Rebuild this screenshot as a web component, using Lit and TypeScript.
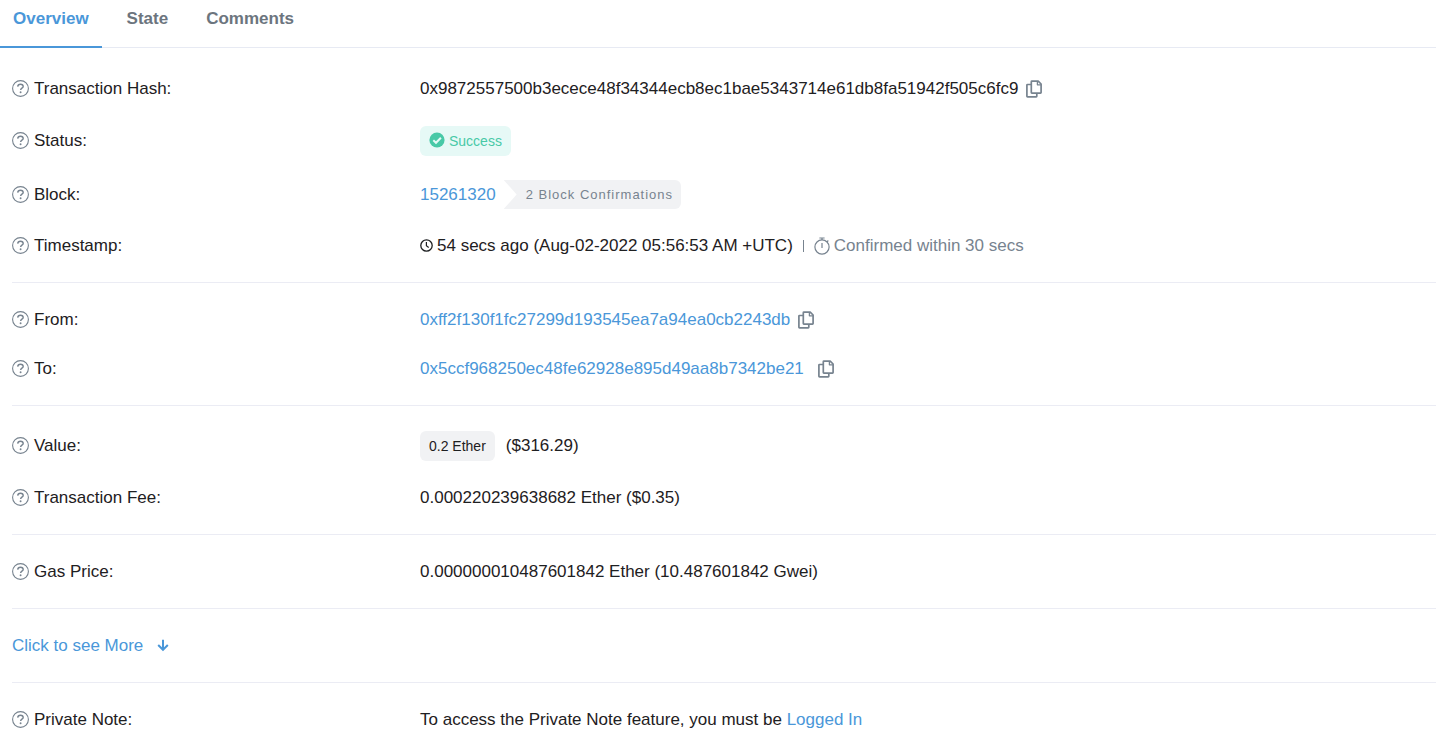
import { LitElement, html, svg, css } from "lit";
import { customElement, property, state } from "lit/decorators.js";
import { classMap } from "lit/directives/class-map.js";

const icons = {
  help: svg`<svg width="17" height="17" viewBox="0 0 17 17" fill="none" stroke="currentColor" aria-hidden="true">
    <circle cx="8.5" cy="8.5" r="7.9" stroke-width="1.1"/>
    <path d="M5.7 6.6c.1-1.600 1.200-2.400 2.800-2.400s2.700.8 2.700 2.200c0 1.800-2.600 1.800-2.600 3.600" stroke-width="1.400"/>
    <circle cx="8.600" cy="12.300" r=".95" fill="currentColor" stroke="none"/>
  </svg>`,
  copy: svg`<svg width="16" height="18" viewBox="0 0 16 18" fill="none" stroke="currentColor" stroke-width="1.700" stroke-linejoin="round" aria-hidden="true">
    <path d="M5.900 1.100h6.300l2.900 2.900v8.500a.6.600 0 0 1-.6.600H5.900a.6.600 0 0 1-.6-.6V1.700a.6.600 0 0 1 .6-.6z"/>
    <path d="M11.400 1.300v3.500h3.500" stroke-width="1.300"/>
    <path d="M5 4.500H1.500a.6.600 0 0 0-.6.600v11.200a.6.600 0 0 0 .6.600h8.700a.6.600 0 0 0 .6-.6v-3"/>
  </svg>`,
  check: svg`<svg width="16" height="18" viewBox="0 0 16 18" aria-hidden="true">
    <circle cx="8" cy="8" r="7.600" fill="currentColor"/>
    <path d="M4.300 8.200l2.700 2.600 4.900-5" fill="none" stroke="#e6f9f6" stroke-width="2"/>
  </svg>`,
  clock: svg`<svg width="13" height="13" viewBox="0 0 13 13" fill="none" stroke="currentColor" aria-hidden="true">
    <circle cx="6.500" cy="6.500" r="5.700" stroke-width="1.300"/>
    <path d="M6.400 3v3.800l2.300 1.700" stroke-width="1.200"/>
  </svg>`,
  stopwatch: svg`<svg width="16" height="18" viewBox="0 0 16 18" fill="none" stroke="currentColor" stroke-width="1.200" aria-hidden="true">
    <circle cx="8" cy="10" r="7.100"/>
    <path d="M5.400 1h5.200M8 1v2M8 6v5M13 4.800l1.300-1.300"/>
  </svg>`,
  arrow: svg`<svg width="12" height="13" viewBox="0 0 12 13" fill="none" stroke="currentColor" stroke-width="2" aria-hidden="true">
    <path d="M6 .800v10M1.200 6l4.800 4.800L10.800 6"/>
  </svg>`,
};

@customElement("copy-button")
class CopyButton extends LitElement {
  @property() value = "";
  static styles = css`
    :host { display: flex; }
    button {
      display: flex;
      padding: 0;
      border: 0;
      background: none;
      color: #77838f;
      cursor: pointer;
    }
  `;
  render() {
    return html`<button type="button" aria-label="Copy" @click=${() => navigator.clipboard?.writeText(this.value)}>${icons.copy}</button>`;
  }
}

@customElement("detail-row")
class DetailRow extends LitElement {
  @property() label = "";
  static styles = css`
    :host {
      display: grid;
      grid-template-columns: 408px 1fr;
      align-items: center;
    }
    .label, .value { display: flex; align-items: center; }
    .label { gap: 5px; }
    .label svg { color: #77838f; }
    .value { flex-wrap: wrap; min-width: 0; overflow-wrap: anywhere; }
    @media (max-width: 800px) {
      :host { grid-template-columns: 1fr; }
    }
  `;
  render() {
    return html`
      <div class="label">${icons.help}<span>${this.label}</span></div>
      <div class="value"><slot></slot></div>
    `;
  }
}

@customElement("app-root")
class AppRoot extends LitElement {
  @state() private tab = "Overview";

  static styles = css`
    :host {
      display: block;
      font-family: "Liberation Sans", Arial, sans-serif;
      font-size: 17px;
      line-height: 25px;
      color: #1e2022;
      background: #fff;
    }
    a { color: #4a97d9; text-decoration: none; }
    .tabs {
      display: flex;
      gap: 12px;
      border-bottom: 1px solid #e7eaf3;
    }
    .tab {
      margin-bottom: -1px;
      padding: 6px 13px 15px;
      border: 0;
      border-bottom: 2px solid transparent;
      background: none;
      font: inherit;
      font-weight: 700;
      color: #6c757e;
      cursor: pointer;
    }
    .tab.active { color: #4a97d9; border-color: #4a97d9; }
    .details { padding: 4px 0 0 12px; }
    .group {
      display: flex;
      flex-direction: column;
      gap: 24px;
      padding: 24px 0;
    }
    .group + .group { border-top: 1px solid #ebecf4; }
    .inline { display: flex; align-items: center; flex-wrap: wrap; }
    .copyable { gap: 8px; }
    .wide { gap: 14px; }
    .block { gap: 8px; }
    .amount { gap: 11px; }
    .time { gap: 4px; }
    .pill {
      display: flex;
      align-items: center;
      gap: 4px;
      height: 30px;
      margin-top: 1px;
      padding: 0 9px;
      border-radius: 6px;
      background: #f1f2f4;
      font-size: 14px;
    }
    .success { background: #e6f9f6; color: #48c9a7; }
    .confirmations {
      padding: 2px 8px 2px 22px;
      border-radius: 0 6px 6px 0;
      background: #f1f2f4;
      clip-path: polygon(0 0, 100% 0, 100% 100%, 0 100%, 13px 50%);
      font-size: 13px;
      letter-spacing: 1px;
      color: #77838f;
    }
    .muted { color: #77838f; }
    .divider { width: 1px; height: 12px; margin: 0 6px; background: #77838f; }
    .more { display: flex; align-items: center; align-self: flex-start; gap: 14px; }
  `;

  render() {
    const hash = "0x9872557500b3ecece48f34344ecb8ec1bae5343714e61db8fa51942f505c6fc9";
    const from = "0xff2f130f1fc27299d193545ea7a94ea0cb2243db";
    const to = "0x5ccf968250ec48fe62928e895d49aa8b7342be21";
    return html`
      <nav class="tabs" role="tablist">
        ${["Overview", "State", "Comments"].map(
          (name) => html`<button
            type="button"
            role="tab"
            aria-selected=${this.tab === name}
            class=${classMap({ tab: true, active: this.tab === name })}
            @click=${() => (this.tab = name)}
          >${name}</button>`
        )}
      </nav>
      <main class="details">
        <section class="group">
          <detail-row label="Transaction Hash:">
            <div class="inline copyable"><span>${hash}</span><copy-button .value=${hash}></copy-button></div>
          </detail-row>
          <detail-row label="Status:"><span class="pill success">${icons.check}Success</span></detail-row>
          <detail-row label="Block:">
            <div class="inline block"><a href="#block">15261320</a><span class="confirmations">2 Block Confirmations</span></div>
          </detail-row>
          <detail-row label="Timestamp:">
            <div class="inline time">
              ${icons.clock}<span>54 secs ago (Aug-02-2022 05:56:53 AM +UTC)</span>
              <span class="divider"></span>
              <span class="inline time muted">${icons.stopwatch}Confirmed within 30 secs</span>
            </div>
          </detail-row>
        </section>
        <section class="group">
          <detail-row label="From:">
            <div class="inline copyable"><a href="#from">${from}</a><copy-button .value=${from}></copy-button></div>
          </detail-row>
          <detail-row label="To:">
            <div class="inline wide"><a href="#to">${to}</a><copy-button .value=${to}></copy-button></div>
          </detail-row>
        </section>
        <section class="group">
          <detail-row label="Value:">
            <div class="inline amount"><span class="pill">0.2 Ether</span><span>($316.29)</span></div>
          </detail-row>
          <detail-row label="Transaction Fee:"><span>0.000220239638682 Ether ($0.35)</span></detail-row>
        </section>
        <section class="group">
          <detail-row label="Gas Price:"><span>0.000000010487601842 Ether (10.487601842 Gwei)</span></detail-row>
        </section>
        <section class="group">
          <a class="more" href="#more">Click to see More ${icons.arrow}</a>
        </section>
        <section class="group">
          <detail-row label="Private Note:"><span>To access the Private Note feature, you must be <a href="#login">Logged In</a></span></detail-row>
        </section>
      </main>
    `;
  }
}
